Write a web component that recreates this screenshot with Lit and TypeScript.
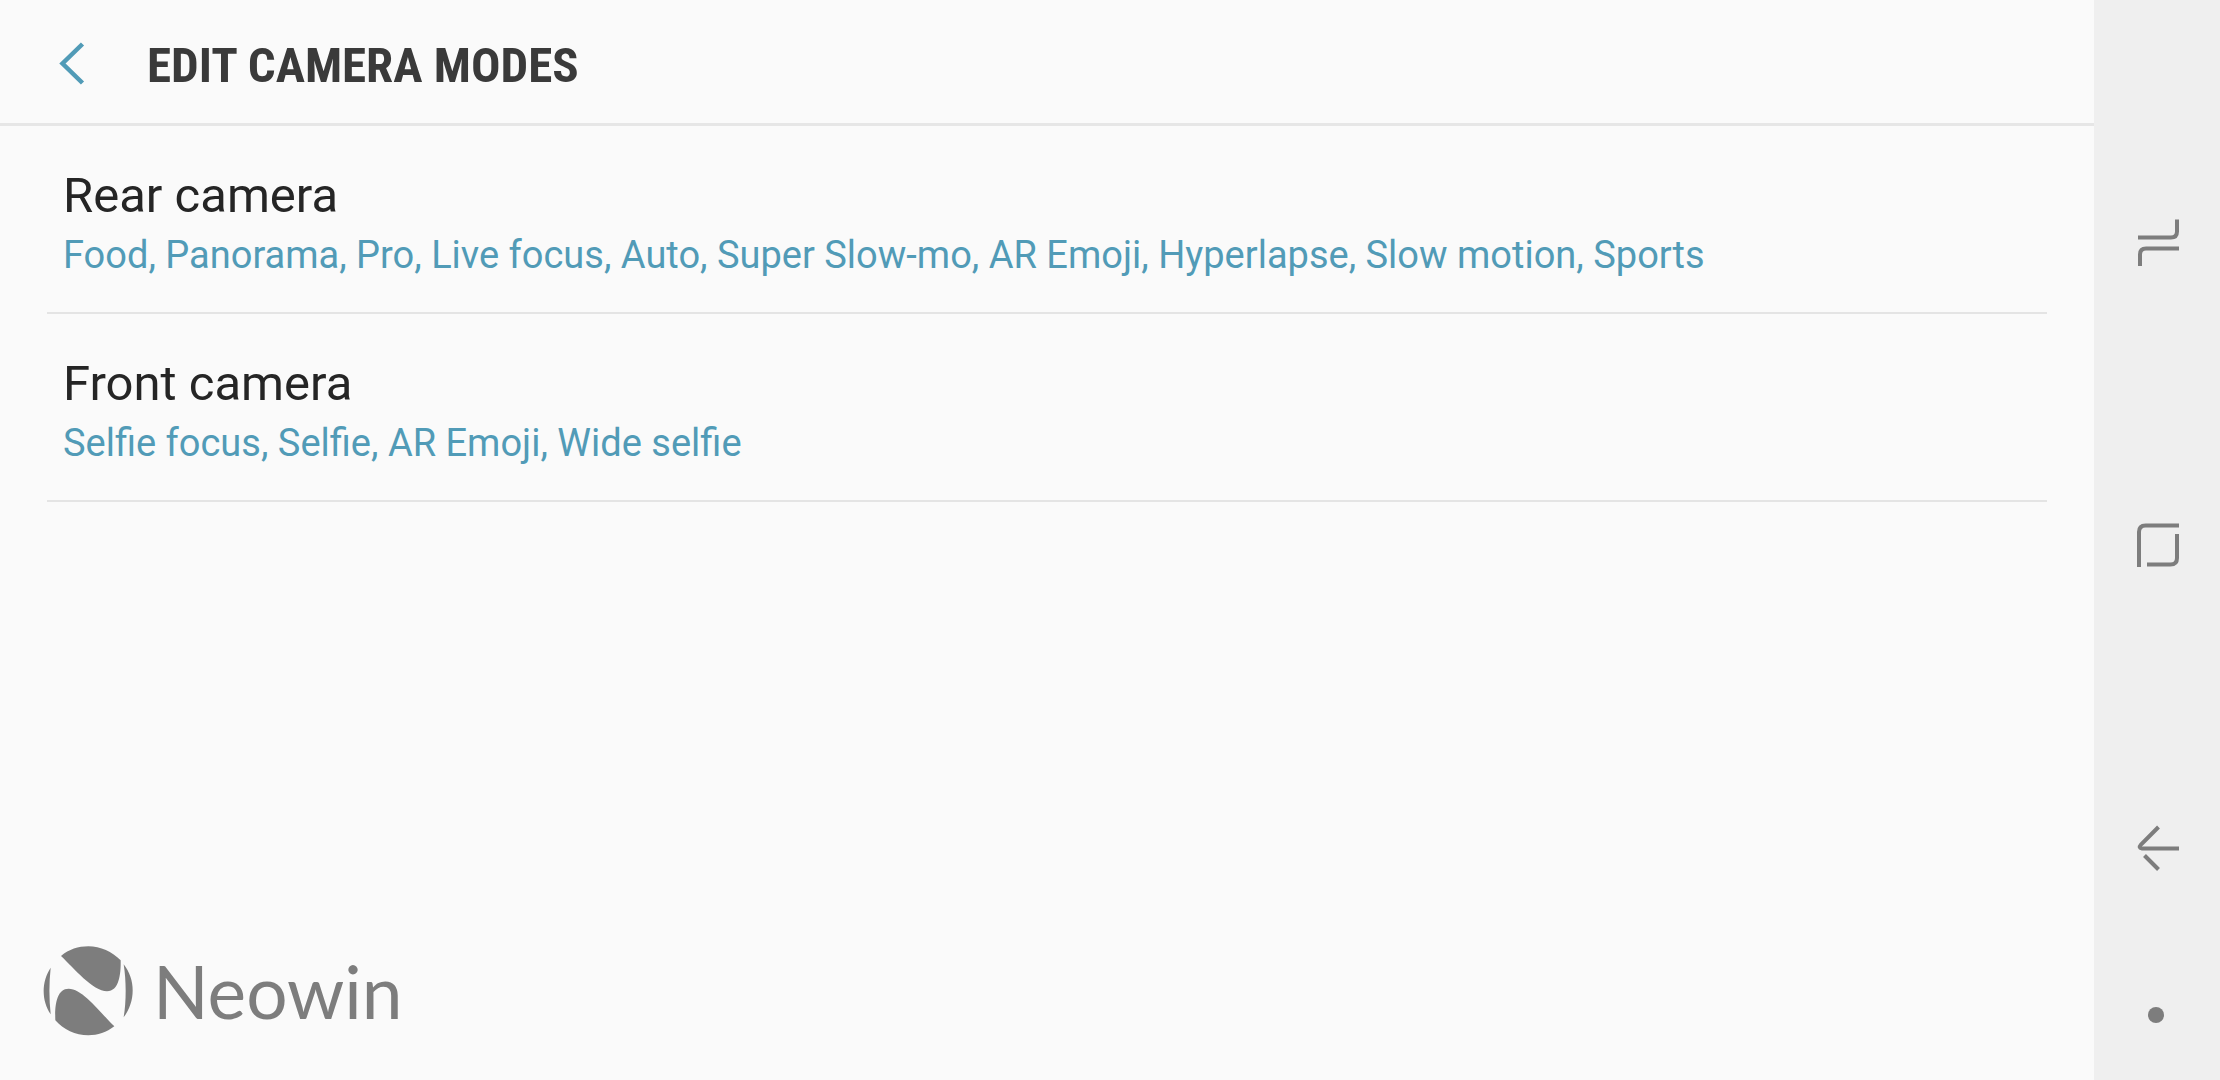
import { LitElement, html, css, svg } from "lit";
import { customElement } from "lit/decorators.js";

interface CameraEntry {
  title: string;
  modes: string[];
}

const CAMERAS: CameraEntry[] = [
  {
    title: "Rear camera",
    modes: [
      "Food", "Panorama", "Pro", "Live focus", "Auto", "Super Slow-mo",
      "AR Emoji", "Hyperlapse", "Slow motion", "Sports",
    ],
  },
  { title: "Front camera", modes: ["Selfie focus", "Selfie", "AR Emoji", "Wide selfie"] },
];

const NAV_ITEMS = [
  {
    label: "Recent apps",
    shape: svg`<path d="M18 34.5H51Q57 34.5 57 28.5V16.5" /><path d="M59 45.5H26Q20 45.5 20 51.5V63" />`,
  },
  {
    label: "Home",
    shape: svg`<path d="M19 62V27Q19 20.5 25.5 20.5H59" /><path d="M57 29V53Q57 59.5 50.5 59.5H27" />`,
  },
  {
    label: "Back",
    shape: svg`<path d="M38.5 20L21 37.5Q18 41 22 41.5H59" /><path d="M24.5 48.5L38.5 62.5" />`,
  },
];

@customElement("app-nav")
class AppNav extends LitElement {
  static styles = css`
    :host {
      display: flex;
      flex-direction: column;
      flex: none;
      box-sizing: border-box;
      width: 126px;
      padding: 92px 0 48px;
      background: #efefef;
    }
    button {
      display: flex;
      align-items: center;
      justify-content: center;
      padding: 0;
      border: 0;
      background: none;
    }
    .key {
      flex: 1;
      padding-left: 6px;
    }
    .icon {
      width: 80px;
      height: 80px;
      fill: none;
      stroke: #7d7d7d;
      stroke-width: 4;
    }
    .pin {
      height: 34px;
      padding-right: 2px;
    }
    .dot {
      width: 16px;
      height: 16px;
      border-radius: 50%;
      background: #7d7d7d;
    }
  `;

  render() {
    return html`
      ${NAV_ITEMS.map(
        (item) => html`
          <button class="key" aria-label=${item.label}>
            <svg class="icon" viewBox="0 0 80 80" aria-hidden="true">${item.shape}</svg>
          </button>
        `
      )}
      <button class="pin" aria-label="Hide navigation bar"><span class="dot"></span></button>
    `;
  }
}

@customElement("app-root")
class AppRoot extends LitElement {
  static styles = css`
    :host {
      display: flex;
      min-height: 100vh;
      background: #fafafa;
      font-family: Roboto, "Liberation Sans", sans-serif;
    }
    .screen {
      display: flex;
      flex-direction: column;
      flex: 1;
      min-width: 0;
    }
    .header {
      display: flex;
      align-items: center;
      gap: 49px;
      padding: 36px 48px 27px;
      border-bottom: 3px solid #e6e6e6;
    }
    .back {
      display: flex;
      padding: 0;
      border: 0;
      background: none;
    }
    .chevron {
      width: 50px;
      height: 50px;
      fill: none;
      stroke: #519bb7;
      stroke-width: 4.5;
    }
    .heading {
      margin: 0;
      color: #3a3a3a;
      font-family: "Roboto Condensed", "Liberation Sans Narrow", Roboto, sans-serif;
      font-size: 49px;
      font-weight: 700;
      line-height: 60px;
    }
    .list {
      flex: 1;
      margin: 0;
      padding: 0 47px;
      list-style: none;
    }
    .item {
      border-bottom: 2px solid #e4e4e4;
    }
    .row {
      display: flex;
      flex-direction: column;
      gap: 6px;
      width: 100%;
      padding: 40px 16px 34px;
      border: 0;
      background: none;
      font-family: inherit;
      text-align: left;
    }
    .title {
      color: #252525;
      font-size: 49px;
      line-height: 60px;
    }
    .modes {
      color: #519bb7;
      font-size: 38px;
      line-height: 46px;
    }
    .brand {
      display: flex;
      align-items: center;
      gap: 20px;
      padding: 0 43px 44px;
      color: #7d7d7d;
    }
    .mark {
      width: 90px;
      height: 90px;
      fill: currentColor;
    }
    .name {
      font-family: Lato, sans-serif;
      font-size: 73px;
      line-height: 90px;
    }
  `;

  render() {
    return html`
      <main class="screen">
        <header class="header">
          <button class="back" aria-label="Navigate up">
            <svg class="chevron" viewBox="0 0 50 50" aria-hidden="true">
              <path d="M34.5 3L14.5 22.5L34.5 42" />
            </svg>
          </button>
          <h1 class="heading">EDIT CAMERA MODES</h1>
        </header>
        <ul class="list">
          ${CAMERAS.map(
            (camera) => html`
              <li class="item">
                <button class="row">
                  <span class="title">${camera.title}</span>
                  <span class="modes">${camera.modes.join(", ")}</span>
                </button>
              </li>
            `
          )}
        </ul>
        <footer class="brand">
          <svg class="mark" viewBox="40 49 270 270" aria-hidden="true">
            <path d="M94 79C118 59 146 50 176 50C213 50 247 66 273 92C274 135 268 185 232 185C190 185 132 115 94 79Z" />
            <path d="M77 272C75 226 81 177 117 177C160 177 214 252 254 290C231 308 204 317 176 317C137 317 101 299 77 272Z" />
            <path d="M63 114C58 160 58 207 63 254C35 213 35 156 63 114Z" />
            <path d="M282 104C318 150 318 214 282 263C290 213 290 155 282 104Z" />
          </svg>
          <span class="name">Neowin</span>
        </footer>
      </main>
      <app-nav></app-nav>
    `;
  }
}
